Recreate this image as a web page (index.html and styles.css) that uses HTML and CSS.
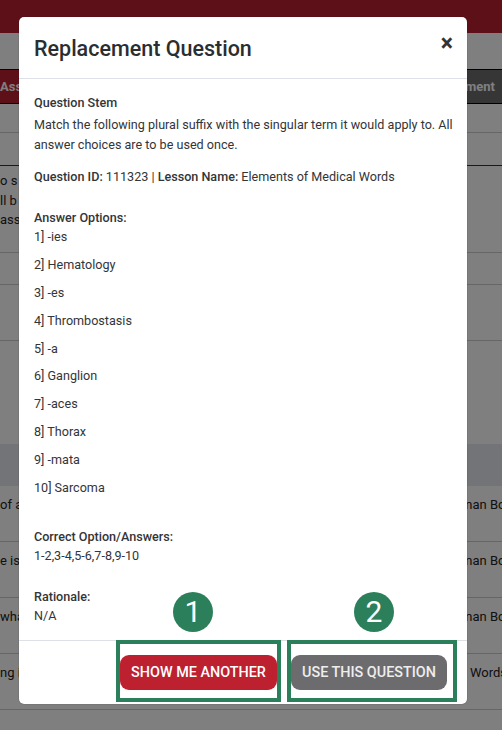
FILE: index.html
```html
<!DOCTYPE html>
<html lang="en">
<head>
    <meta charset="UTF-8">
    <meta name="viewport" content="width=device-width, initial-scale=1.0">
    <title>Replacement Question</title>
    <link rel="stylesheet" href="styles.css">
</head>
<body>

<!-- Page behind the modal -->
<div class="page">
    <div class="topbar"></div>
    <div class="tabs">
        <div class="tab tab-red">Ass</div>
        <div class="tab tab-dark">ment</div>
    </div>
    <div class="row row-29"></div>
    <div class="row row-33"></div>
    <div class="intro">
        <div>o s</div>
        <div>ll b</div>
        <div>ass</div>
    </div>
    <div class="row row-33 row-top"></div>
    <div class="row row-56"></div>
    <div class="band"></div>
    <div class="qrow"><span>of a</span><span class="qrow-topic">man Bo</span></div>
    <div class="qrow"><span>e is:</span><span class="qrow-topic">man Bo</span></div>
    <div class="qrow"><span>wha</span><span class="qrow-topic">man Bo</span></div>
    <div class="qrow"><span>ng i</span><span class="qrow-topic qrow-words">Words</span></div>
</div>

<div class="backdrop"></div>

<div class="modal">
    <div class="modal-header">
        <div class="modal-title">Replacement Question</div>
        <div class="close">&times;</div>
    </div>

    <div class="modal-body">
        <div class="stem-label">Question Stem</div>
        <p class="stem">Match the following plural suffix with the singular term it would apply to. All answer choices are to be used once.</p>
        <div class="meta"><b>Question ID:</b> 111323 | <b>Lesson Name:</b> Elements of Medical Words</div>

        <div class="label">Answer Options:</div>
        <div class="option">1] -ies</div>
        <div class="option">2] Hematology</div>
        <div class="option">3] -es</div>
        <div class="option">4] Thrombostasis</div>
        <div class="option">5] -a</div>
        <div class="option">6] Ganglion</div>
        <div class="option">7] -aces</div>
        <div class="option">8] Thorax</div>
        <div class="option">9] -mata</div>
        <div class="option">10] Sarcoma</div>

        <div class="label label-answers">Correct Option/Answers:</div>
        <div class="option">1-2,3-4,5-6,7-8,9-10</div>

        <div class="label label-rationale">Rationale:</div>
        <div>N/A</div>
    </div>

    <div class="modal-footer">
        <button class="btn btn-red">Show me another</button>
        <button class="btn btn-gray">Use this question</button>
    </div>
</div>

<!-- Callouts drawn over the screenshot -->
<div class="callout-box box-one"></div>
<div class="callout-box box-two"></div>
<div class="callout-num num-one">1</div>
<div class="callout-num num-two">2</div>

</body>
</html>
```

FILE: styles.css
```css
:root {
    --red: #bd2130;
    --gray: #6c6c6f;
    --green: #2b805b;
    --text: #333538;
}

* {
    box-sizing: border-box;
}

html,
body {
    height: 100%;
}

body {
    margin: 0;
    position: relative;
    overflow: hidden;
    background-color: #fff;
    font-family: Roboto, "Liberation Sans", sans-serif;
    font-size: 12.6px;
    line-height: 19.5px;
    color: var(--text);
}

/* Page behind the modal */
.topbar {
    height: 33px;
    background-color: var(--red);
}

.tabs {
    display: flex;
    justify-content: space-between;
    height: 35px;
    margin-top: 36px;
    border-top: 1px solid #000;
    border-bottom: 1px solid #000;
    font-size: 13px;
    font-weight: 700;
    color: #fff;
    line-height: 33px;
}

.tab {
    width: 50%;
    white-space: nowrap;
}

.tab-red {
    background-color: var(--red);
}

.tab-dark {
    background-color: var(--gray);
    text-align: right;
    padding-right: 7px;
}

.row {
    border-bottom: 1px solid #ccc;
}

.row-29 {
    height: 29px;
}

.row-33 {
    height: 33px;
    border-bottom-color: #333;
}

.row-top {
    border-top: 1px solid #ccc;
    border-bottom-color: #ccc;
}

.row-56 {
    height: 56px;
}

.intro {
    height: 86px;
    padding-top: 5px;
    font-size: 13px;
    color: #222;
}

.band {
    height: 42px;
    margin-top: 103px;
    background-color: #e6e8ee;
}

.qrow {
    display: flex;
    justify-content: space-between;
    height: 56px;
    padding-top: 9px;
    border-bottom: 1px solid #ccc;
    font-size: 13px;
    color: #222;
    white-space: nowrap;
}

.qrow-topic {
    width: 41px;
}

.qrow-words {
    width: 32px;
}

/* Modal */
.backdrop {
    position: absolute;
    inset: 0;
    background-color: rgba(0, 0, 0, 0.5);
}

.modal {
    position: absolute;
    left: 19px;
    top: 17px;
    width: 448px;
    height: 687px;
    display: flex;
    flex-direction: column;
    background-color: #fff;
    border-radius: 5px;
    box-shadow: 0 0 1px rgba(0, 0, 0, 0.6);
}

.modal-header {
    display: flex;
    justify-content: space-between;
    height: 62px;
    padding: 16px 15px 0;
    border-bottom: 1px solid #dee0e8;
}

.modal-title {
    font-size: 21.5px;
    font-weight: 500;
    line-height: 32px;
    color: #2b2e31;
}

.close {
    margin: 1px -1px 0 0;
    font-size: 23px;
    font-weight: 700;
    line-height: 20px;
    color: #333;
}

.modal-body {
    flex: 1;
    padding: 14px 12px 0 15px;
}

.modal-body b,
.stem-label,
.label {
    font-weight: 500;
}

.stem-label {
    margin-bottom: 2.5px;
}

.stem {
    margin: 0 0 13px;
}

.meta {
    margin-bottom: 21px;
}

.option {
    margin-bottom: 8.4px;
}

.label-answers {
    margin-top: 29px;
}

.label-rationale {
    margin-top: 21px;
}

.modal-footer {
    display: flex;
    justify-content: flex-end;
    gap: 14px;
    height: 64px;
    padding: 14px 20px 0 0;
    border-top: 1px solid #dee0e8;
}

.btn {
    height: 35px;
    border: none;
    border-radius: 9px;
    font-family: inherit;
    font-size: 14.4px;
    font-weight: 500;
    color: #fff;
    text-transform: uppercase;
}

.btn-red {
    width: 157px;
    background-color: var(--red);
}

.btn-gray {
    width: 156px;
    background-color: var(--gray);
    color: #eee;
}

/* Green callouts */
.callout-box {
    position: absolute;
    top: 640px;
    height: 62px;
    border: 4px solid var(--green);
}

.box-one {
    left: 116px;
    width: 165px;
}

.box-two {
    left: 287px;
    width: 170px;
}

.callout-num {
    position: absolute;
    top: 592px;
    width: 40px;
    height: 40px;
    border-radius: 50%;
    background-color: var(--green);
    color: #fff;
    font-size: 30px;
    line-height: 40px;
    text-align: center;
}

.num-one {
    left: 173px;
}

.num-two {
    left: 354px;
}
```
